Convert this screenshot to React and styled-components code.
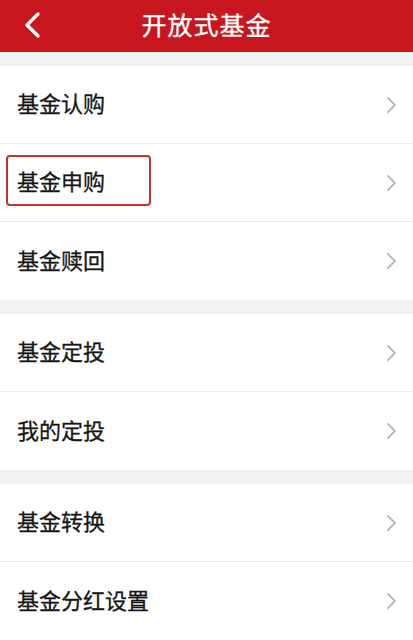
import React from "react";
import styled, { createGlobalStyle } from "styled-components";

const GlobalStyle = createGlobalStyle`
  html, body {
    margin: 0;
    padding: 0;
    background: #f2f2f2;
    font-family: "Noto Sans CJK SC", "Noto Sans", sans-serif;
  }
`;

const sections = [
  [
    { label: "基金认购" },
    { label: "基金申购", marked: true },
    { label: "基金赎回" },
  ],
  [{ label: "基金定投" }, { label: "我的定投" }],
  [{ label: "基金转换" }, { label: "基金分红设置" }],
];

const App = () => (
  <Page>
    <GlobalStyle />
    <Header>
      <BackButton>
        <svg width="20" height="28" viewBox="0 0 20 28">
          <path d="M16 3 L5 14 L16 25" fill="none" stroke="#fff" strokeWidth="3.4" strokeLinecap="round" strokeLinejoin="round" />
        </svg>
      </BackButton>
      <Title>开放式基金</Title>
    </Header>
    {sections.map((items, i) => (
      <Section key={i}>
        {items.map((item) => (
          <Row key={item.label}>
            <Label $marked={item.marked}>{item.label}</Label>
            <svg width="12" height="18" viewBox="0 0 12 18">
              <path d="M3 2 L10 9 L3 16" fill="none" stroke="#b8b8b8" strokeWidth="1.8" strokeLinecap="round" strokeLinejoin="round" />
            </svg>
          </Row>
        ))}
      </Section>
    ))}
  </Page>
);

const Page = styled.div`
  width: 413px;
  min-height: 640px;
  background: #f2f2f2;
`;

const Header = styled.div`
  height: 52px;
  background: #c8161e;
  display: flex;
  align-items: center;
  justify-content: center;
  position: relative;
`;

const BackButton = styled.div`
  position: absolute;
  left: 22px;
  top: 11px;
  display: flex;
`;

const Title = styled.div`
  color: #fff;
  font-size: 25px;
  letter-spacing: 1px;
  line-height: 1;
  margin-bottom: 4px;
  -webkit-text-stroke: 0.3px #fff;
`;

const Section = styled.div`
  background: #fff;
  margin-top: 14px;
`;

const Row = styled.div`
  height: 78px;
  display: flex;
  align-items: center;
  justify-content: space-between;
  padding: 0 16px 0 17px;
  border-bottom: 1px solid #ebebeb;
  box-sizing: border-box;
  &:last-child {
    border-bottom: none;
  }
`;

const Label = styled.div`
  font-size: 22px;
  color: #161616;
  line-height: 1;
  margin-bottom: 5px;
  position: relative;
  -webkit-text-stroke: 0.3px #161616;
  &::after {
    content: "";
    display: ${(p) => (p.$marked ? "block" : "none")};
    position: absolute;
    left: -11px;
    top: -14px;
    width: 145px;
    height: 51px;
    border: 2.5px solid #c9302c;
    border-radius: 4px;
    box-sizing: border-box;
  }
`;

export default App;
